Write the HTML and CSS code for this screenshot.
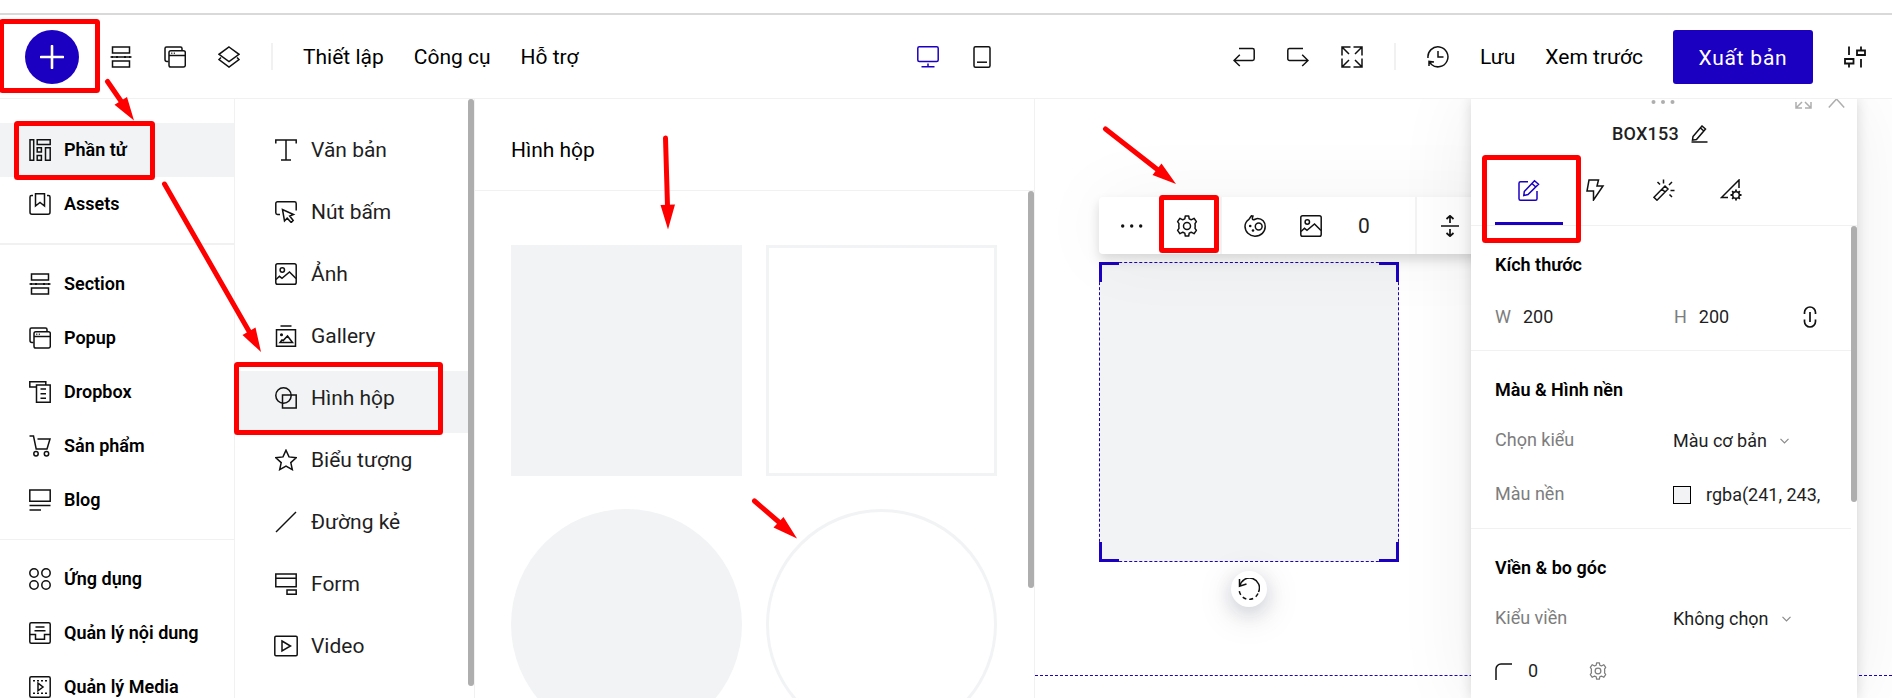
FILE: index.html
```html
<!DOCTYPE html>
<html lang="vi">
<head>
<meta charset="utf-8">
<title>Page builder</title>
<link rel="stylesheet" href="styles.css">
</head>
<body>
<svg class="defs" width="0" height="0">
  <symbol id="i-section" viewBox="0 0 22 22"><path d="M2.500 1h17v6h-17zM2.500 15h17v6h-17zM.5 11h21"/><path d="M1.500 11h1.500M6 11h2M14 11h2M19 11h1.500" stroke-width="2"/></symbol>
  <symbol id="i-popup" viewBox="0 0 22 22"><path d="M4.500 15.500H3a2 2 0 0 1-2-2V2.500a1.500 1.500 0 0 1 1.500-1.500h14a1.500 1.500 0 0 1 1.500 1.500V4.500"/><rect x="5" y="4.700" width="16.300" height="16.300" rx="1.800"/><path d="M5 9.500h16"/><path d="M7.300 7.300h1M9.800 7.300h1" stroke-width="1.500"/></symbol>
  <symbol id="i-image" viewBox="0 0 22 22"><rect x=".8" y=".8" width="20.400" height="20.400" rx="1.800"/><circle cx="7.300" cy="7" r="2.200"/><path d="M1 16.500l3.500-3.200 2.500 2 7.500-6.300 6.500 6.500"/></symbol>
  <symbol id="i-gear" viewBox="0 0 22 22"><circle cx="11" cy="11" r="3.500"/><path d="M9.300 1h3.400l.5 2.900 2 .9 2.800-1.500 2.400 3.300-1.400 2.100.2 2.300-.2 2.300 1.400 2.100-2.400 3.300-2.800-1.500-2 .9-.5 2.900H9.300l-.5-2.900-2-.9L4 18.700l-2.400-3.300L3 13.300l-.2-2.300L3 8.700 1.600 6.600 4 3.300l2.800 1.500 2-.9z" stroke-linejoin="round"/></symbol>
</svg>

<header class="topbar">
  <button class="add"><svg width="24" height="24" viewBox="0 0 24 24"><path d="M12 1v22M1 12h22"/></svg></button>
  <nav class="tools">
    <svg class="icon"><use href="#i-section"/></svg>
    <svg class="icon"><use href="#i-popup"/></svg>
    <svg class="icon" viewBox="0 0 22 22"><path d="M11 1l10 7.300-10 7.300L1 8.300zM3 11.500l-2 2 10 7.500 10-7.500-2-2"/></svg>
  </nav>
  <i class="sep sep-left"></i>
  <nav class="links"><span>Thiết lập</span><span>Công cụ</span><span>Hỗ trợ</span></nav>
  <nav class="tools devices">
    <svg class="icon blue" viewBox="0 0 22 22"><rect x=".8" y=".8" width="20.400" height="14.700" rx="1.500"/><path d="M11 17.500V21M4.500 20.800h13"/></svg>
    <svg class="icon" viewBox="0 0 22 22"><rect x="3" y=".8" width="16" height="20.400" rx="1.500"/><path d="M6 16.200h10"/></svg>
  </nav>
  <div class="actions">
    <nav class="tools">
      <svg class="icon" viewBox="0 0 22 22"><path d="M6 2.500h13.500a1.700 1.700 0 0 1 1.700 1.700v8.600a1.700 1.700 0 0 1-1.700 1.700H1M6.800 8.800L1 14.500l5.800 5.500"/></svg>
      <svg class="icon" viewBox="0 0 22 22"><path d="M16 2.500H2.500A1.700 1.700 0 0 0 .8 4.200v8.600a1.700 1.700 0 0 0 1.700 1.700H21M15.200 8.800l5.800 5.700-5.800 5.500"/></svg>
      <svg class="icon" viewBox="0 0 22 22"><path d="M9.500 1H1v8.500M12.500 1H21v8.500M1 12.500V21h8.500M21 12.500V21h-8.500M1 1l7 7M21 1l-7 7M1 21l7-7M21 21l-7-7"/></svg>
    </nav>
    <i class="sep"></i>
    <svg class="icon" viewBox="0 0 22 22"><path d="M1 12A10 10 0 1 1 4.500 18.500L2 15.500M11 5v6h5.500M2 20v-4.700l5 .7"/></svg>
    <nav class="links"><span>Lưu</span><span>Xem trước</span></nav>
    <button class="publish">Xuất bản</button>
    <svg class="icon" viewBox="0 0 22 22"><path d="M5 .5V9M5 18v3.500M17 .5V5M17 13v8.500M1 13h8.500v4.500H1zM13 4.500h8V9h-8z" stroke-width="1.800"/></svg>
  </div>
</header>

<main class="workspace">
  <aside class="sidebar">
    <ul>
      <li class="active"><svg class="icon" viewBox="0 0 22 22"><path d="M1 .8h3.700v20.400H1zM8.200.8h13v4.700h-13zM8.200 8.800h4.200V13H8.200zM8.200 16.500h4.200v4.700H8.200zM16.500 8.800h4.700v12.400h-4.700z"/></svg>Phần tử</li>
      <li><svg class="icon" viewBox="0 0 22 22"><path d="M4 2.500H2.500A1.500 1.500 0 0 0 1 4v15.200a2 2 0 0 0 2 2h16a2 2 0 0 0 2-2V4a1.500 1.500 0 0 0-1.500-1.500H18M6.500.8h9V13L11 9.500 6.500 13z"/></svg>Assets</li>
    </ul>
    <ul>
      <li><svg class="icon"><use href="#i-section"/></svg>Section</li>
      <li><svg class="icon"><use href="#i-popup"/></svg>Popup</li>
      <li><svg class="icon" viewBox="0 0 22 22"><path d="M7 6H.8V.8h16V4M7.500 4h13.700v17.200H7.500zM11.500 8h5.500M11.500 12.700h5.500M11.500 17.200h5.500"/></svg>Dropbox</li>
      <li><svg class="icon" viewBox="0 0 22 22"><path d="M.5 1h4l2.700 13H18l3-10H8.500"/><circle cx="7" cy="18.700" r="2.200"/><circle cx="17.500" cy="18.700" r="2.200"/></svg>Sản phẩm</li>
      <li><svg class="icon" viewBox="0 0 22 22"><path d="M.8 1h20.400v11.300H.8zM.5 16.500h21M.5 21H12"/></svg>Blog</li>
    </ul>
    <ul>
      <li><svg class="icon" viewBox="0 0 22 22"><circle cx="5" cy="5" r="4.200"/><circle cx="17" cy="5" r="4.200"/><circle cx="5" cy="17" r="4.200"/><circle cx="17" cy="17" r="4.200"/></svg>Ứng dụng</li>
      <li><svg class="icon" viewBox="0 0 22 22"><rect x=".8" y=".8" width="20.400" height="20.400" rx="1.500"/><path d="M6.500 5h9M5.500 8.800h11M1 12.500h5.500v4.700h9v-4.700H21"/></svg>Quản lý nội dung</li>
      <li><svg class="icon" viewBox="0 0 22 22"><rect x=".8" y=".8" width="20.400" height="20.400" rx="1.500"/><path d="M9 7.200l5 3.800-5 3.800z"/><path d="M4 4.800h14M4 17.200h14" stroke-dasharray="2 2"/></svg>Quản lý Media</li>
    </ul>
  </aside>

  <section class="elements">
    <ul>
      <li><svg class="icon" viewBox="0 0 22 22"><path d="M.8 4.500V1h20.400v3.500M11 1v20M6 21h10"/></svg>Văn bản</li>
      <li><svg class="icon" viewBox="0 0 22 22"><path d="M5 13.500H2.500A1.700 1.700 0 0 1 .8 11.800V2.500A1.700 1.700 0 0 1 2.500.8h17a1.700 1.700 0 0 1 1.700 1.700v7M7.500 8.500l2 11.500 2.700-2.800 4 4.300 2-2-3.500-4.500 3.800-1.500z"/></svg>Nút bấm</li>
      <li><svg class="icon"><use href="#i-image"/></svg>Ảnh</li>
      <li><svg class="icon" viewBox="0 0 22 22"><path d="M5.500 1h11M1.500 4.800h19v16.400h-19zM5 17.500h12.500l-5-6.500-4.300 4.500-1.200-.5z"/><circle cx="6.500" cy="9.800" r=".8"/></svg>Gallery</li>
      <li class="active"><svg class="icon" viewBox="0 0 22 22"><circle cx="8.500" cy="8.500" r="7.700"/><path d="M7.500 8h13.700v13H7.500z"/></svg>Hình hộp</li>
      <li><svg class="icon" viewBox="0 0 22 22"><path d="M11 1.200l3 6.700 7.200.8-5.400 4.900 1.500 7-6.300-3.600-6.300 3.600 1.500-7L.8 8.700 8 7.900z"/></svg>Biểu tượng</li>
      <li><svg class="icon" viewBox="0 0 22 22"><path d="M1 21L21 1"/></svg>Đường kẻ</li>
      <li><svg class="icon" viewBox="0 0 22 22"><path d="M.8 1h20.400v12.700H.8zM.8 5.200h20.400M12 17h9.200v4.200H12z"/></svg>Form</li>
      <li><svg class="icon video" viewBox="0 0 24 22"><rect x=".8" y="1.300" width="22.400" height="19.400" rx="1.200"/><path d="M8 6l8.500 5L8 16z"/></svg>Video</li>
    </ul>
    <i class="thumb"></i>
  </section>

  <section class="shapes">
    <h2>Hình hộp</h2>
    <div class="shapes-body">
      <div class="grid">
        <div class="shape fill"></div>
        <div class="shape line"></div>
        <div class="shape fill round"></div>
        <div class="shape line round"></div>
      </div>
      <i class="thumb"></i>
    </div>
  </section>

  <section class="canvas">
    <div class="guide"></div>
    <div class="box">
      <i class="corner tl"></i><i class="corner tr"></i><i class="corner bl"></i><i class="corner br"></i>
      <span class="rotate"><svg class="icon" viewBox="0 0 22 22"><path d="M2 8A9.800 9.800 0 1 1 20.500 14M1.500 1v7.200l7-2.200"/><path d="M20 15.500A9.800 9.800 0 0 1 1.200 11.500" stroke-dasharray="4 3"/></svg></span>
    </div>
    <div class="toolbar">
      <div class="tool"><svg class="icon" viewBox="0 0 22 22"><g class="solid"><circle cx="1.700" cy="11" r="1.700"/><circle cx="10.700" cy="11" r="1.700"/><circle cx="19.700" cy="11" r="1.700"/></g></svg></div>
      <div class="tool"><svg class="icon"><use href="#i-gear"/></svg></div>
      <i class="rule"></i>
      <div class="tool wide"><svg class="icon" viewBox="0 0 22 22"><path d="M7.500.8L5 4.300C2.500 6 1 8.300 1 11.300a9.900 9.900 0 0 0 10 9.900c6 0 10.200-4.200 10.200-9.700 0-4.500-3-8-7.500-8-2 0-3.200 1.500-4.500 1.200C7.700 4.200 8.500 2.500 9 1z"/><circle cx="14.700" cy="11.500" r="3.400"/><g class="solid"><circle cx="6.200" cy="11" r="1.300"/><circle cx="9" cy="15.500" r="1.300"/></g></svg></div>
      <div class="tool"><svg class="icon"><use href="#i-image"/></svg></div>
      <div class="tool num">0</div>
      <i class="rule"></i>
      <div class="tool"><svg class="icon" viewBox="0 0 22 22"><path d="M2 11h18M11 8V1M7.500 4L11 .8 14.500 4M11 14v7M7.500 18l3.500 3.200 3.500-3.200" stroke-width="1.700"/></svg></div>
    </div>

    <div class="panel">
      <div class="grip">
        <svg class="dots" viewBox="0 0 24 6" width="24" height="6"><circle cx="2.500" cy="3" r="2"/><circle cx="12" cy="3" r="2"/><circle cx="21.500" cy="3" r="2"/></svg>
        <svg class="mini" width="17" height="17" viewBox="0 0 17 17"><path d="M1 10v6h6M1 16l6-6M16 10v6h-6M16 16l-6-6"/></svg>
        <svg class="mini" width="17" height="17" viewBox="0 0 17 17"><path d="M.8 15.500l7.700-8.500 7.700 8.500"/></svg>
      </div>
      <div class="name">BOX153<svg width="17" height="18" viewBox="0 0 17 18"><path d="M2 11.500L11 1l3.500 3-9 10.500-4 .7zM9.500 3l3.300 3M.5 17h16"/></svg></div>
      <div class="tabs">
        <div class="tab on"><svg class="icon blue" viewBox="0 0 22 22"><path d="M10 2.800H2.500A1.500 1.500 0 0 0 1 4.300v15.400a1.500 1.500 0 0 0 1.500 1.500h15a1.500 1.500 0 0 0 1.500-1.500V12M6.300 12.500L16.500 1.700l4 3.500L10 15.500l-4.200 1zM14 4.500l3.800 3.500"/></svg></div>
        <div class="tab"><svg class="icon" viewBox="0 0 22 22"><path d="M5 1h9.500l-1.500 6h6l-9.500 14V12H3z"/></svg></div>
        <div class="tab"><svg class="icon" viewBox="0 0 22 22"><path d="M1 18.300L12 7l3 3L4 21.200zM9 10l3 3M10.500.5v4M4.500 3l2.500 2.500M19 3l-3 3M17.500 11.500h4M16.500 15.500L19 18"/></svg></div>
        <div class="tab"><svg class="icon" viewBox="0 0 22 22"><path d="M8 18.500H1.500L19 1v8"/><circle cx="16" cy="16" r="3.300"/><path d="M16 10.500v2M16 19.500v2M10.500 16h2M19.500 16h2M12.100 12.100l1.500 1.500M18.400 18.400l1.500 1.500M12.100 19.900l1.500-1.500M18.400 13.600l1.500-1.500" stroke-width="1.800"/></svg></div>
      </div>
      <div class="groups">
        <div class="group size">
          <h3>Kích thước</h3>
          <div class="row"><label class="dim"><em>W</em>200</label><label class="dim second"><em>H</em>200</label><svg class="chain" width="14" height="22" viewBox="0 0 14 22"><path d="M1.500 8V6.500a5.500 5.500 0 0 1 11 0V8M1.500 13.500V15.500a5.500 5.500 0 0 0 11 0V13.500M7 6v10" stroke-width="1.700"/></svg></div>
        </div>
        <div class="group">
          <h3>Màu &amp; Hình nền</h3>
          <div class="row"><em>Chọn kiểu</em><span class="value">Màu cơ bản<svg class="caret" width="9" height="6" viewBox="0 0 9 6"><path d="M.5.8l4 4 4-4"/></svg></span></div>
          <div class="row second-row"><em>Màu nền</em><span class="value"><i class="swatch"></i>rgba(241, 243,</span></div>
        </div>
        <div class="group border">
          <h3>Viền &amp; bo góc</h3>
          <div class="row"><em>Kiểu viền</em><span class="value">Không chọn<svg class="caret" width="9" height="6" viewBox="0 0 9 6"><path d="M.5.8l4 4 4-4"/></svg></span></div>
          <div class="row radius"><svg width="17" height="17" viewBox="0 0 17 17"><path d="M1 17V6a5 5 0 0 1 5-5h11"/></svg><span>0</span><svg class="gear"><use href="#i-gear"/></svg></div>
        </div>
        <i class="thumb"></i>
      </div>
    </div>
  </section>
</main>

<svg class="notes" width="1892" height="698" viewBox="0 0 1892 698">
  <g class="frames">
    <rect x="1.500" y="21.500" width="96" height="69" rx="1"/>
    <rect x="16.500" y="123.500" width="136" height="54" rx="1"/>
    <rect x="236.500" y="364.500" width="204" height="68" rx="1"/>
    <rect x="1161.500" y="197.500" width="55" height="53" rx="1"/>
    <rect x="1484.500" y="157.500" width="94" height="83" rx="1"/>
  </g>
  <g class="arrows">
    <path d="M107.500 81.500L123 104M164.500 184L250 333M665.500 138L667.500 206M754.500 501L780 523M1105.500 129L1158 170"/>
    <path class="head" d="M134 120.500L114.500 104.700 127 97zM261 352L242.500 335 255.500 327.500zM668 229.500L660.500 205 675 204.500zM797 538.500L773.500 527.500 783.500 517zM1176 184L1152.500 175 1161.500 163.500z"/>
  </g>
</svg>
</body>
</html>
```
FILE: styles.css
```css
* { box-sizing: border-box; }
body { margin: 0; width: 1892px; height: 698px; overflow: hidden; position: relative; display: flex; flex-direction: column; background: #fff; color: #000; font: 400 21px/28px Roboto, "Noto Sans", sans-serif; }
ul { list-style: none; margin: 0; padding: 0; }
h2, h3 { margin: 0; font-size: inherit; }
em { font-style: normal; color: #7d7d7d; }
button { border: 0; padding: 0; font: inherit; color: #fff; background: #1c00c2; }
svg { fill: none; stroke: #111; stroke-width: 1.5; flex: none; }
.defs { position: absolute; }
.icon { width: 22px; height: 22px; display: block; }
.blue { stroke: #1c00c2; }
.solid { fill: #111; stroke: none; }
.thumb { display: block; width: 6px; border-radius: 3px; background: #aeaeae; }

.topbar { flex: none; height: 99px; padding: 15px 26px 0 25px; display: flex; align-items: center; border-bottom: 1px solid #f1f1f1; background: linear-gradient(#fff 13px, #d9d9d9 13px, #d9d9d9 15px, #fff 15px); }
.add { width: 54px; height: 54px; margin-right: 31px; border-radius: 50%; display: grid; place-items: center; }
.add svg { stroke: #fff; stroke-width: 2.6; stroke-linecap: round; }
.tools { display: flex; gap: 32px; }
.sep { width: 2px; height: 27px; background: #f1f1f1; }
.sep-left { margin: 0 30px 0 31px; }
.links { display: flex; gap: 30px; white-space: nowrap; }
.sep-left + .links { width: 614px; }
.actions { margin-left: auto; display: flex; align-items: center; gap: 31px; }
.publish { width: 140px; height: 54px; margin-left: -1px; border-radius: 3px; padding-top: 2px; letter-spacing: .75px; }

.workspace { flex: 1; min-height: 0; display: flex; }
.sidebar { flex: none; width: 235px; padding-top: 24px; border-right: 1px solid #f1f1f1; font-size: 18px; font-weight: 600; overflow: hidden; }
.sidebar li { height: 54px; padding-left: 29px; display: flex; align-items: center; gap: 13px; }
.sidebar ul + ul { margin-top: 12px; padding-top: 12px; border-top: 2px solid #f1f1f1; }
.sidebar ul + ul + ul { margin-top: 12px; border-width: 1px; }
.active { background: #f1f3f5; }

.elements { flex: none; width: 240px; display: flex; border-right: 1px solid #f1f1f1; color: #1f1f1f; }
.elements ul { width: 233px; padding-top: 24px; }
.elements li { height: 62px; padding: 0 0 8px 40px; display: flex; align-items: center; gap: 14px; }
.elements .video { width: 24px; margin: 0 -1px; }
.elements .thumb { height: 587px; }

.shapes { flex: none; width: 560px; border-right: 1px solid #f1f1f1; overflow: hidden; }
.shapes h2 { height: 92px; padding: 37px 0 0 36px; font-weight: 400; border-bottom: 1px solid #f1f1f1; }
.shapes-body { display: flex; justify-content: space-between; }
.grid { padding: 54px 0 0 36px; display: grid; grid-template-columns: 231px 231px; grid-auto-rows: 231px; gap: 33px 24px; }
.fill { background: #f1f3f5; }
.line { border: 3px solid #f1f3f5; }
.round { border-radius: 50%; }
.shapes .thumb { height: 397px; }

.canvas { flex: 1; position: relative; overflow: hidden; background: #fff; }
.guide { position: absolute; left: 0; right: 0; top: 576px; border-top: 1px dashed #1c00c2; }
.box { position: absolute; left: 64px; top: 163px; width: 300px; height: 300px; border: 1px dashed #1c00c2; background: #f1f3f5; }
.corner { position: absolute; width: 20px; height: 20px; border: 0 solid #1c00c2; }
.tl { left: -1px; top: -1px; border-width: 3px 0 0 3px; }
.tr { right: -1px; top: -1px; border-width: 3px 3px 0 0; }
.bl { left: -1px; bottom: -1px; border-width: 0 0 3px 3px; }
.br { right: -1px; bottom: -1px; border-width: 0 3px 3px 0; }
.rotate { position: absolute; left: 131px; top: 308px; width: 36px; height: 36px; border-radius: 50%; background: #fff; display: grid; place-items: center; box-shadow: 0 8px 36px rgba(20, 30, 60, .15), 0 6px 18px rgba(20, 30, 60, .14); }
.toolbar { position: absolute; left: 64px; top: 98px; width: 420px; height: 57px; display: flex; align-items: center; border-radius: 4px; background: #fff; box-shadow: 0 6px 12px rgba(0, 0, 0, .14), 0 0 75px rgba(0, 0, 0, .05); padding-left: 5px; }
.tool { flex: none; width: 55px; display: grid; place-items: center; }
.tool:nth-child(2) { width: 56px; }
.rule { flex: none; width: 2px; height: 57px; margin-left: 5px; background: #f3f3f3; }
.wide { width: 61px; padding-left: 5px; }
.num { width: 52px; color: #222; }
.num + .rule { margin-left: 25px; }
.rule + .tool:last-child { width: 66px; }

.panel { position: absolute; left: 436px; top: 0; width: 386px; height: 600px; background: #fff; box-shadow: 0 0 12px rgba(0, 0, 0, .14), 0 0 75px rgba(0, 0, 0, .07); font-size: 18px; line-height: 24px; color: #1f1f1f; }
.grip { height: 23px; padding-right: 12px; display: flex; justify-content: flex-end; }
.dots { fill: #aeaeae; stroke: none; margin-right: 120px; }
.mini { stroke: #aeaeae; margin: -7px 0 0 0; }
.mini + .mini { margin-left: 16px; }
.name { height: 24px; padding-left: 141px; display: flex; align-items: center; gap: 12px; font-weight: 500; letter-spacing: .2px; }
.tabs { height: 80px; padding-left: 24px; display: flex; border-bottom: 1px solid #f1f1f1; }
.tab { width: 67px; padding: 33px 0 0 23px; height: 79px; }
.on { width: 68px; border-bottom: 3px solid #1c00c2; }
.tab:nth-child(2) { padding-left: 21px; }
.groups { position: relative; }
.groups .thumb { position: absolute; right: 0; top: 0; height: 276px; }
.group { width: 380px; height: 178px; padding: 27px 0 0 24px; border-bottom: 1px solid #f1f1f1; }
.group h3 { color: #000; font-weight: 600; height: 24px; margin-bottom: 25px; }
.size { height: 125px; }
.border { border: 0; }
.row { height: 26px; display: flex; align-items: center; white-space: nowrap; }
.row > em { width: 178px; }
.second-row { margin-top: 28px; }
.value { display: flex; align-items: center; padding-top: 1px; }
.caret { stroke: #8a8a8a; stroke-width: 1.2; margin-left: 13px; }
.swatch { width: 18px; height: 18px; margin-right: 15px; border: 1px solid #000; background: #f1f3f5; }
.size .row { height: 28px; padding-top: 1px; }
.dim { width: 179px; display: flex; gap: 12px; }
.second { width: 129px; }
.radius { margin-top: 27px; }
.radius span { margin-left: 16px; width: 64px; }
.gear { width: 18px; height: 18px; stroke: #7d7d7d; margin-left: -3px; }

.notes { position: absolute; left: 0; top: 0; pointer-events: none; }
.frames { stroke: #f00; stroke-width: 5; }
.arrows { stroke: #f00; stroke-width: 5; stroke-linecap: round; }
.head { fill: #f00; stroke: none; }
```
